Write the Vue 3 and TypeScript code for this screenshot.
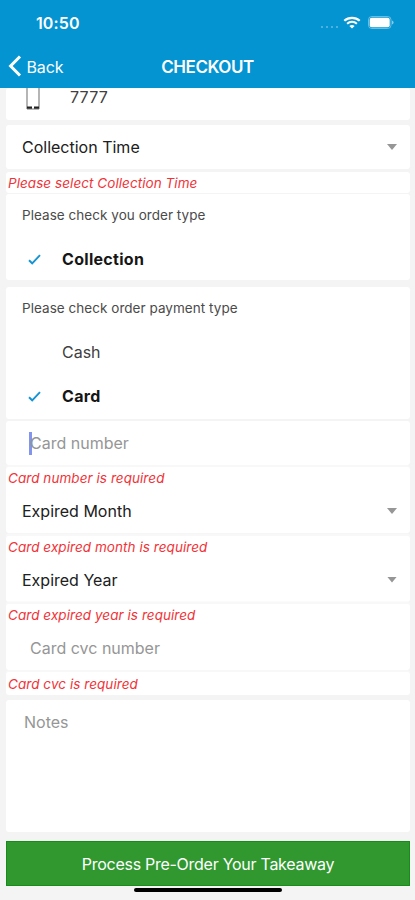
<script setup lang="ts">
import { ref } from 'vue'

const notes = ref('')
</script>

<template>
  <main class="screen">
    <header class="header">
      <div class="status">
        <span class="time">10:50</span>
        <span class="dots"><i v-for="n in 4" :key="n"></i></span>
        <svg class="wifi" width="18" height="13" viewBox="0 0 18 13" fill="none" stroke="#fff">
          <path d="M1.3 4.7C5.6.8 12.4.8 16.7 4.7" stroke-width="2.2" />
          <path d="M4.1 7.7c2.8-2.5 7-2.5 9.8 0" stroke-width="2" />
          <path d="M6.4 9.9c1.5-1.3 3.7-1.3 5.2 0L9 12.6z" fill="#fff" stroke="none" />
        </svg>
        <svg class="battery" width="26" height="13" viewBox="0 0 26 13">
          <rect x=".5" y=".5" width="22.5" height="12" rx="3.3" fill="none" stroke="#fff" stroke-opacity=".4" />
          <rect x="1.7" y="1.8" width="20" height="9.4" rx="2" fill="#fff" />
          <path d="M24 4.5q1.6.6 1.6 2t-1.6 2z" fill="#fff" fill-opacity=".5" />
        </svg>
      </div>
      <nav class="nav">
        <button class="back" type="button">
          <svg width="14" height="22" viewBox="0 0 14 22" fill="none" stroke="#fff" stroke-width="3">
            <path d="M12 1.5 2.6 11 12 20.5" />
          </svg>
          <span>Back</span>
        </button>
        <h1>CHECKOUT</h1>
      </nav>
    </header>

    <section class="card phone">
      <svg width="14" height="22" viewBox="0 0 14 22">
        <path d="M1 0v21M13 0v21" stroke="#858585" stroke-width="1.2" />
        <path d="M1 19.8h5M8 19.8h5" stroke="#222" stroke-width="2.6" />
        <path d="M1 21h12" stroke="#777" stroke-width="1" />
      </svg>
      <span>7777</span>
    </section>

    <section class="card time-select select">
      <span>Collection Time</span><i class="caret"></i>
    </section>
    <p class="card time-error error">Please select Collection Time</p>

    <section class="card order">
      <p class="prompt">Please check you order type</p>
      <div class="option chosen">
        <svg width="13" height="11" viewBox="0 0 13 11"><path d="M1 6.2 4.2 9.3 12 1.2" fill="none" stroke="#1593d3" stroke-width="1.9" /></svg>
        <span>Collection</span>
      </div>
    </section>

    <section class="card payment">
      <p class="prompt">Please check order payment type</p>
      <div class="option"><span>Cash</span></div>
      <div class="option chosen">
        <svg width="13" height="11" viewBox="0 0 13 11"><path d="M1 6.2 4.2 9.3 12 1.2" fill="none" stroke="#1593d3" stroke-width="1.9" /></svg>
        <span>Card</span>
      </div>
    </section>

    <section class="card field number"><i class="cursor"></i><span>Card number</span></section>

    <section class="card group month">
      <p class="error">Card number is required</p>
      <div class="select"><span>Expired Month</span><i class="caret"></i></div>
    </section>
    <section class="card group">
      <p class="error">Card expired month is required</p>
      <div class="select"><span>Expired Year</span><i class="caret"></i></div>
    </section>
    <section class="card group">
      <p class="error">Card expired year is required</p>
      <div class="field"><span>Card cvc number</span></div>
    </section>
    <p class="card cvc-error error">Card cvc is required</p>

    <textarea v-model="notes" class="card notes" placeholder="Notes"></textarea>

    <button class="submit" type="button">Process Pre-Order Your Takeaway</button>
    <div class="home"></div>
  </main>
</template>

<style>
body { background: #f4f4f4; }
</style>

<style scoped>
* { box-sizing: border-box; }
.screen {
  width: 415px; height: 900px; overflow: hidden;
  display: flex; flex-direction: column;
  background: #f4f4f4; color: #202020;
  font: 16px/20px Inter, "Liberation Sans", sans-serif;
}
.screen > * { flex: none; }
p, h1 { margin: 0; }
button { border: 0; padding: 0; font: inherit; color: #fff; }
.header { height: 88px; background: #0394d1; color: #fff; }
.status { height: 44px; padding: 2px 21px 0 36px; display: flex; align-items: center; }
.time { font-size: 16px; font-weight: 600; letter-spacing: .1px; }
.dots { display: flex; gap: 3px; margin: 8px 5px 0 auto; }
.dots i { width: 2px; height: 2px; background: #4db0de; }
.wifi { margin: -1px 7px 0 0; }
.battery { margin-top: -1px; }
.nav { height: 44px; padding-top: 1px; display: grid; grid-template-columns: 1fr auto 1fr; align-items: center; }
.back { margin-left: 8px; display: flex; align-items: center; gap: 4.5px; background: none; letter-spacing: -.15px; }
.back svg { margin-top: -1px; }
h1 { font-size: 17px; font-weight: 600; line-height: 22px; letter-spacing: -.45px; }
.card { width: 404px; margin-left: 6px; background: #fff; border-radius: 3px; }
.phone { height: 32px; padding-left: 20px; display: flex; gap: 30px; color: #404040; }
.phone span { margin-top: -1px; letter-spacing: .2px; }
.select { display: flex; align-items: center; justify-content: space-between; height: 44px; padding: 0 13px 0 16px; }
.time-select { margin-top: 5px; }
.caret { width: 10px; height: 6px; background: #969696; clip-path: polygon(0 0, 100% 0, 50% 100%); }
.error { height: 21px; font-size: 13.5px; line-height: 23px; letter-spacing: .06px; font-style: italic; color: #f13338; padding-left: 2px; white-space: nowrap; }
.time-error { margin-top: 3px; }
.order { height: 86px; margin-top: 1px; }
.prompt { height: 43px; padding: 11px 0 0 16px; font-size: 13.5px; line-height: 20px; letter-spacing: .04px; color: #4b4b4b; }
.option { height: 44px; padding-left: 56px; display: flex; align-items: center; color: #404040; }
.option svg { margin: 1px 21.5px 0 -34.5px; }
.chosen { color: #161616; font-weight: 700; letter-spacing: .3px; }
.payment { height: 132px; margin-top: 7px; }
.field { height: 44px; padding-left: 24px; display: flex; align-items: center; color: #969696; }
.number { margin-top: 2px; }
.number span { margin-top: -1px; }
.cursor { width: 3px; height: 23px; margin: 0 -2px 0 -1px; background: #8294ed; }
.group { height: 66px; margin-top: 2.5px; box-shadow: 0 -2.5px #f8f8f8; }
.month { margin-top: 2px; box-shadow: 0 -2px #f8f8f8; }
.group .select, .group .field { padding-top: 2px; }
.cvc-error { height: 23px; margin-top: 2px; line-height: 24px; box-shadow: 0 -2px #f8f8f8; }
.notes { display: block; height: 132px; margin-top: 5px; padding: 12px 18px; border: 0; outline: 0; resize: none; font: inherit; }
.notes::placeholder { color: #969696; opacity: 1; }
.submit { width: 404px; height: 45px; margin: 9px 0 0 6px; padding-top: 1px; background: #30982f; border: 1px solid #168c1b; letter-spacing: -.27px; }
.home { width: 148px; height: 4px; margin: 2px 0 0 134px; background: #000; border-radius: 2px; }
</style>
